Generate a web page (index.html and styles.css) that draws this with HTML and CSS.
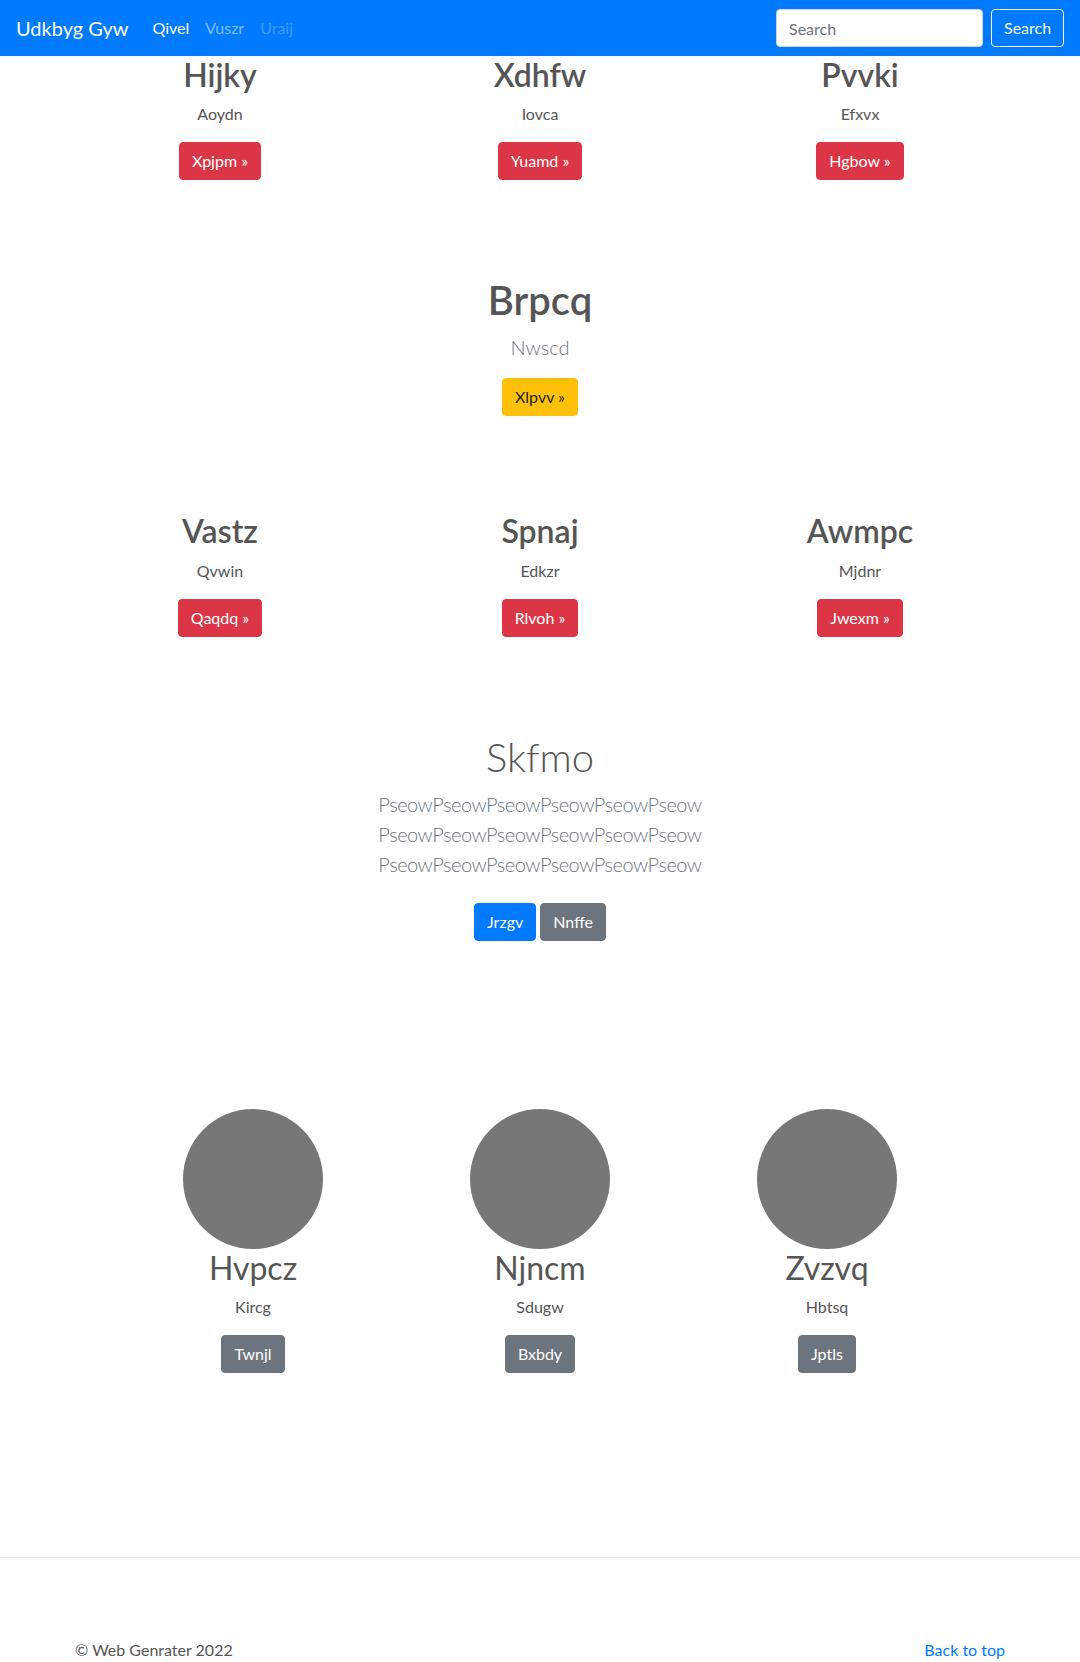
FILE: index.html
```html
<!DOCTYPE html>
<html lang="en">
<head>
<meta charset="utf-8">
<title>Udkbyg Gyw</title>
<link rel="stylesheet" href="styles.css">
</head>
<body>
<header class="navbar">
  <a class="brand" href="#">Udkbyg Gyw</a>
  <nav class="nav">
    <a class="nav-link active" href="#">Qivel</a>
    <a class="nav-link" href="#">Vuszr</a>
    <a class="nav-link disabled" href="#">Uraij</a>
  </nav>
  <form class="search">
    <input class="search-input" type="text" placeholder="Search">
    <button class="search-btn" type="button">Search</button>
  </form>
</header>

<main>
  <section class="row3">
    <div class="feature">
      <h2>Hijky</h2>
      <p>Aoydn</p>
      <a class="btn btn-danger" href="#">Xpjpm &raquo;</a>
    </div>
    <div class="feature">
      <h2>Xdhfw</h2>
      <p>Iovca</p>
      <a class="btn btn-danger" href="#">Yuamd &raquo;</a>
    </div>
    <div class="feature">
      <h2>Pvvki</h2>
      <p>Efxvx</p>
      <a class="btn btn-danger" href="#">Hgbow &raquo;</a>
    </div>
  </section>

  <section class="hero">
    <h1 class="hero-title">Brpcq</h1>
    <p class="lead">Nwscd</p>
    <a class="btn btn-warning" href="#">Xlpvv &raquo;</a>
  </section>

  <section class="row3">
    <div class="feature">
      <h2>Vastz</h2>
      <p>Qvwin</p>
      <a class="btn btn-danger" href="#">Qaqdq &raquo;</a>
    </div>
    <div class="feature">
      <h2>Spnaj</h2>
      <p>Edkzr</p>
      <a class="btn btn-danger" href="#">Rlvoh &raquo;</a>
    </div>
    <div class="feature">
      <h2>Awmpc</h2>
      <p>Mjdnr</p>
      <a class="btn btn-danger" href="#">Jwexm &raquo;</a>
    </div>
  </section>

  <section class="hero hero-light">
    <h1 class="hero-title light">Skfmo</h1>
    <p class="lead lead-block">PseowPseowPseowPseowPseowPseow<br>PseowPseowPseowPseowPseowPseow<br>PseowPseowPseowPseowPseowPseow</p>
    <div class="btn-pair">
      <a class="btn btn-primary" href="#">Jrzgv</a>
      <a class="btn btn-secondary" href="#">Nnffe</a>
    </div>
  </section>

  <section class="circles">
    <div class="person">
      <div class="avatar"></div>
      <h2>Hvpcz</h2>
      <p>Kircg</p>
      <a class="btn btn-secondary" href="#">Twnjl</a>
    </div>
    <div class="person">
      <div class="avatar"></div>
      <h2>Njncm</h2>
      <p>Sdugw</p>
      <a class="btn btn-secondary" href="#">Bxbdy</a>
    </div>
    <div class="person">
      <div class="avatar"></div>
      <h2>Zvzvq</h2>
      <p>Hbtsq</p>
      <a class="btn btn-secondary" href="#">Jptls</a>
    </div>
  </section>
</main>

<hr class="divider">

<footer class="footer">
  <p class="copy">&copy; Web Genrater 2022</p>
  <a class="back" href="#">Back to top</a>
</footer>
</body>
</html>
```

FILE: styles.css
```css
* {
  box-sizing: border-box;
}

body {
  margin: 0;
  font-family: Lato, "Liberation Sans", sans-serif;
  font-size: 16px;
  line-height: 1.5;
  color: #555;
  background: #fff;
}

/* Navbar */
.navbar {
  height: 56px;
  background: #007bff;
  display: flex;
  align-items: center;
  padding: 0 16px;
}

.brand {
  font-size: 20px;
  line-height: 30px;
  color: #fff;
  text-decoration: none;
  margin-right: 16px;
}

.nav {
  display: flex;
  flex: 1;
}

.nav-link {
  padding: 8px;
  color: rgba(255, 255, 255, 0.5);
  text-decoration: none;
}

.nav-link.active {
  color: #fff;
}

.nav-link.disabled {
  color: rgba(255, 255, 255, 0.25);
}

.search {
  display: flex;
  gap: 8px;
  margin: 0;
}

.search-input {
  width: 207px;
  height: 38px;
  padding: 6px 12px;
  border: 1px solid #ced4da;
  border-radius: 4px;
  font: inherit;
  color: #495057;
  background: #fff;
}

.search-input::placeholder {
  color: #6c757d;
}

.search-btn {
  width: 73px;
  height: 38px;
  padding: 6px 12px;
  border: 1px solid #f8f9fa;
  border-radius: 4px;
  background: transparent;
  color: #f8f9fa;
  font: inherit;
}

/* Buttons */
.btn {
  display: inline-block;
  padding: 6px 12px;
  font-size: 16px;
  line-height: 24px;
  border: 1px solid transparent;
  border-radius: 4px;
  color: #fff;
  text-decoration: none;
}

.btn-danger {
  background: #dc3545;
  border-color: #dc3545;
}

.btn-warning {
  background: #ffc107;
  border-color: #ffc107;
  color: #212529;
}

.btn-primary {
  background: #007bff;
  border-color: #007bff;
}

.btn-secondary {
  background: #6c757d;
  border-color: #6c757d;
}

/* Three column feature rows */
.row3 {
  width: 960px;
  margin: 96px auto 0;
  display: grid;
  grid-template-columns: repeat(3, 1fr);
  text-align: center;
}

.row3:first-child {
  margin-top: 0;
}

.feature h2 {
  font-size: 32px;
  line-height: 1.2;
  font-weight: 600;
  margin: 0 0 8px;
}

.feature p {
  margin: 0 0 16px;
}

/* Centered hero blocks */
.hero {
  margin-top: 96px;
  text-align: center;
}

.hero-title {
  font-size: 40px;
  line-height: 48px;
  font-weight: 600;
  margin: 0 0 8px;
}

.hero-title.light {
  font-weight: 300;
}

.lead {
  font-size: 20px;
  line-height: 30px;
  font-weight: 300;
  color: #6c757d;
  margin: 0 0 16px;
}

.lead-block {
  margin-bottom: 24px;
  letter-spacing: -0.5px;
}

.btn-pair {
  display: flex;
  justify-content: center;
  gap: 4px;
}

/* Circles */
.circles {
  width: 861px;
  margin: 168px auto 0;
  display: grid;
  grid-template-columns: repeat(3, 1fr);
  text-align: center;
}

.avatar {
  width: 140px;
  height: 140px;
  border-radius: 50%;
  background: #777;
  margin: 0 auto;
}

.person h2 {
  font-size: 32px;
  line-height: 1.2;
  font-weight: 400;
  margin: 0 0 8px;
}

.person p {
  margin: 0 0 16px;
}

/* Footer */
.divider {
  margin: 184px 0 0;
  border: 0;
  border-top: 1px solid #e5e5e5;
}

.footer {
  width: 960px;
  margin: 80px auto 0;
  padding: 0 15px;
  display: flex;
  justify-content: space-between;
}

.copy {
  margin: 0;
}

.back {
  color: #007bff;
  text-decoration: none;
}
```
